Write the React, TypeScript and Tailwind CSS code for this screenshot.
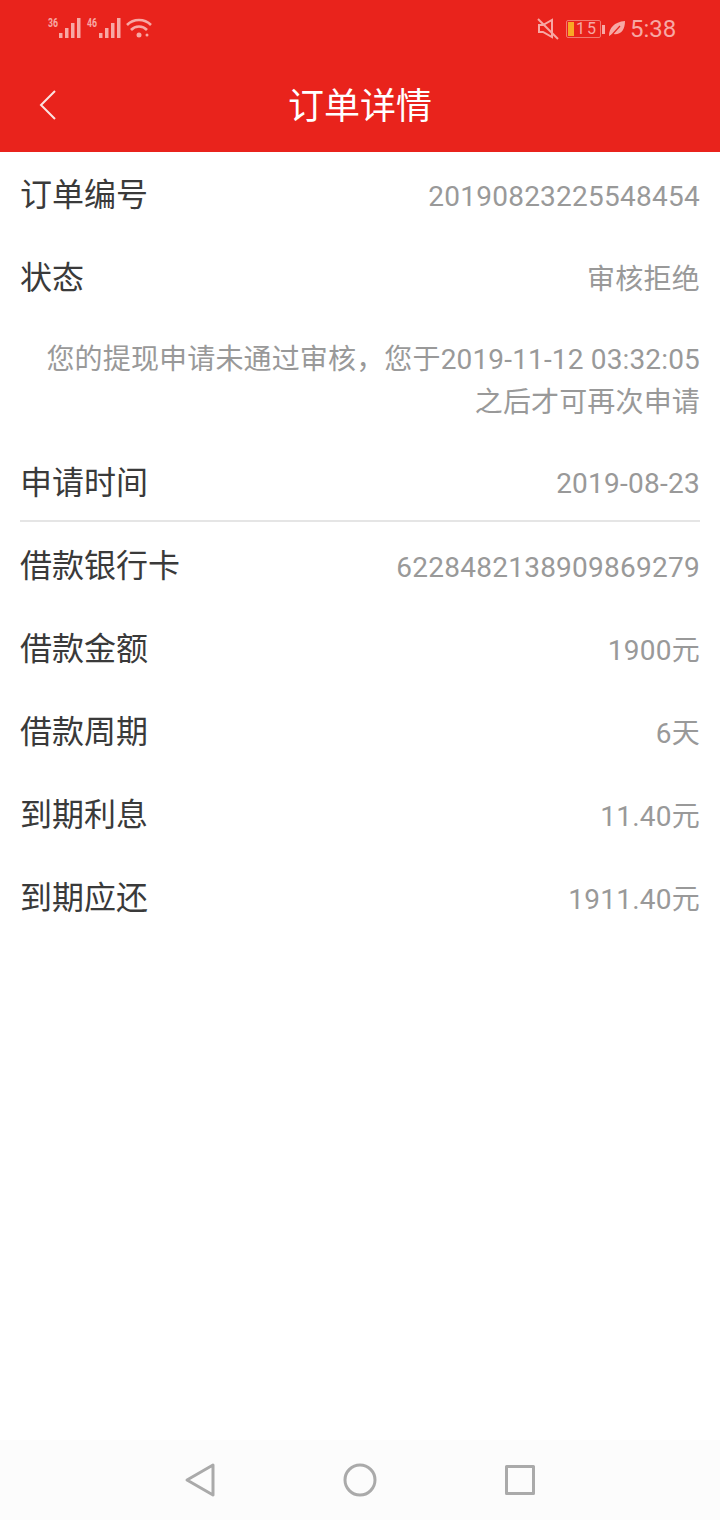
const FONT = "font-['Roboto','Noto_Sans_CJK_SC',sans-serif]";

const TOP_ROWS = [
  { label: '订单编号', value: '20190823225548454' },
  { label: '状态', value: '审核拒绝' },
];

const BOTTOM_ROWS = [
  { label: '借款银行卡', value: '6228482138909869279' },
  { label: '借款金额', value: '1900元' },
  { label: '借款周期', value: '6天' },
  { label: '到期利息', value: '11.40元' },
  { label: '到期应还', value: '1911.40元' },
];

function Row({ label, value }: { label: string; value: string }) {
  return (
    <div className="flex h-[83px] items-center justify-between">
      <span className="mb-[4px] text-[32px] leading-none text-[#3a3a3a]">{label}</span>
      <span className="text-[28px] leading-none tracking-[0.25px] text-[#999999]">{value}</span>
    </div>
  );
}

function SignalBars({ x }: { x: number }) {
  return (
    <g fill="#f7a8a4">
      <rect x={x} y="33" width="3.500" height="5" />
      <rect x={x + 6} y="28" width="3.500" height="10" />
      <rect x={x + 12} y="23" width="3.500" height="15" />
      <rect x={x + 18} y="18" width="3.500" height="20" />
    </g>
  );
}

function StatusLeft() {
  return (
    <svg width="130" height="50" viewBox="30 0 130 50" className="absolute left-[30px] top-0">
      <text x="48" y="27" fontSize="12" fontWeight="700" fill="#f7a8a4" fontFamily="Roboto" textLength="10" lengthAdjust="spacingAndGlyphs">36</text>
      <SignalBars x={59} />
      <text x="87" y="27" fontSize="12" fontWeight="700" fill="#f7a8a4" fontFamily="Roboto" textLength="10" lengthAdjust="spacingAndGlyphs">46</text>
      <SignalBars x={99} />
      <g fill="none" stroke="#f7a8a4" strokeWidth="2.6">
        <path d="M127 25 a17 17 0 0 1 24 0" />
        <path d="M131 30 a11 11 0 0 1 16 0" />
      </g>
      <circle cx="139" cy="35" r="2.500" fill="#f7a8a4" />
      <circle cx="147" cy="35" r="1.500" fill="#f7a8a4" />
    </svg>
  );
}

function StatusRight() {
  return (
    <div className="absolute left-[537px] top-[16px] flex h-[26px] items-center">
      <svg width="22" height="24" viewBox="0 0 22 24" fill="none" stroke="#f7a8a4" strokeWidth="2">
        <path d="M2 8h4l9-5v17l-9-5H2z" />
        <path d="M1 2l20 20" />
      </svg>
      <div className="relative ml-[7px] flex h-[18px] w-[35px] items-center rounded-[2px] border border-[#f2776f]">
        <div className="ml-[1px] h-[14px] w-[6px] bg-[#f9a825]" />
        <span className="ml-[2px] text-[16px] leading-none tracking-[2px] text-[#f7a8a4]">15</span>
      </div>
      <div className="ml-[1px] h-[9px] w-[3px] bg-[#f7a8a4]" />
      <svg width="18" height="18" viewBox="0 0 18 18" className="ml-[3px]">
        <path d="M1 16C1 8 6 2 17 1c0 9-4 14-12 13z" fill="#f7a8a4" />
        <path d="M2 17L12 6" stroke="#e9231c" strokeWidth="1.2" />
      </svg>
      <span className="ml-[4px] text-[24px] leading-none text-[#f7a8a4]">5:38</span>
    </div>
  );
}

export default function App() {
  return (
    <div className={`${FONT} flex h-[1520px] w-[720px] flex-col bg-white`}>
      <header className="relative flex h-[152px] shrink-0 items-end justify-center bg-[#e9231c] pb-[21px]">
        <StatusLeft />
        <StatusRight />
        <svg width="18" height="30" viewBox="0 0 18 30" fill="none" stroke="#fbe3e1" strokeWidth="2" className="absolute left-[39px] top-[90px]">
          <path d="M16 1L2 15l14 14" />
        </svg>
        <h1 className="text-[36px] font-normal leading-[48px] text-white">订单详情</h1>
      </header>

      <main className="flex-1 px-5 pt-[3px]">
        {TOP_ROWS.map((row) => (
          <Row key={row.label} label={row.label} value={row.value} />
        ))}
        <p className="mt-[17px] text-right text-[28px] leading-[43px] tracking-[0.16px] text-[#999999]">
          您的提现申请未通过审核，您于2019-11-12 03:32:05
          <br />
          之后才可再次申请
        </p>
        <div className="mb-[4px] mt-[23px] flex h-[75px] items-center justify-between border-b-2 border-[#e5e5e5]">
          <span className="mb-[2px] text-[32px] leading-none text-[#3a3a3a]">申请时间</span>
          <span className="text-[28px] leading-none tracking-[0.25px] text-[#999999]">2019-08-23</span>
        </div>
        {BOTTOM_ROWS.map((row) => (
          <Row key={row.label} label={row.label} value={row.value} />
        ))}
      </main>

      <nav className="flex h-[80px] shrink-0 items-center justify-center gap-[120px] bg-[#fcfcfc]">
        <svg width="40" height="40" viewBox="0 0 40 40" fill="none" stroke="#aaaaaa" strokeWidth="3" strokeLinejoin="round">
          <path d="M33 5L7 20l26 15z" />
        </svg>
        <svg width="40" height="40" viewBox="0 0 40 40" fill="none" stroke="#aaaaaa" strokeWidth="3">
          <circle cx="20" cy="20" r="15" />
        </svg>
        <svg width="40" height="40" viewBox="0 0 40 40" fill="none" stroke="#aaaaaa" strokeWidth="3" strokeLinejoin="round">
          <rect x="6.500" y="6.500" width="27" height="27" />
        </svg>
      </nav>
    </div>
  );
}
